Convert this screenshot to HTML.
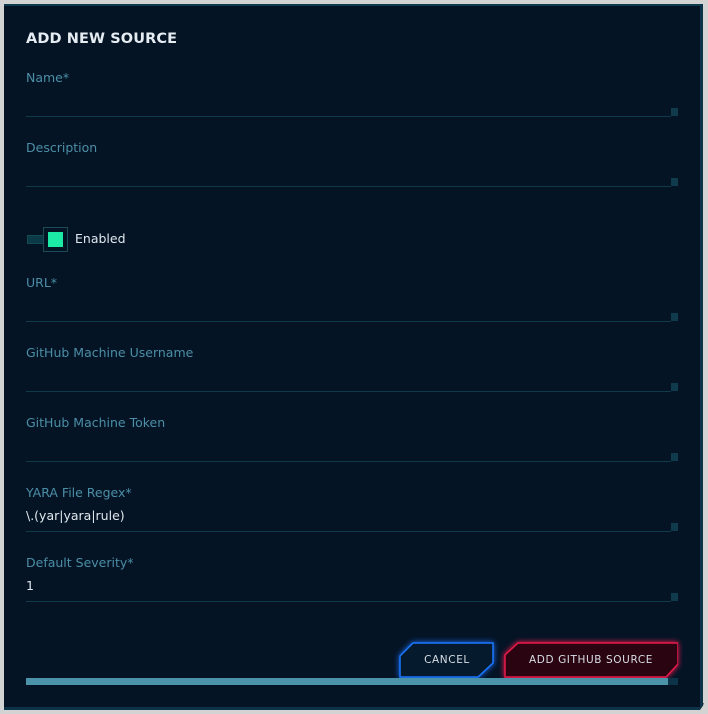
<!DOCTYPE html>
<html><head><meta charset="utf-8"><style>
*{margin:0;padding:0;box-sizing:border-box}
body{width:708px;height:714px;background:#d3d3d3;position:relative;overflow:hidden;font-family:"DejaVu Sans","Liberation Sans",sans-serif}
.panel{position:absolute;left:4px;top:4px;width:699px;height:706px;background:#041425;border-top:2px solid #0f3a4c;border-bottom:3px solid #0c3348;}
.rb{position:absolute;left:700px;top:4px;width:3px;height:706px;background:#0c3348}
.title{position:absolute;left:26px;top:31px;color:#e6edf2;font-size:14.5px;font-weight:bold;letter-spacing:0.1px}
.lab{position:absolute;left:26px;color:#4b8ea6;font-size:12.5px}
.val{position:absolute;left:26px;color:#e0e8ee;font-size:12.5px}
.line{position:absolute;left:26px;width:645px;height:1px;background:#0e3a4a}
.sq{position:absolute;left:671px;width:7px;height:8px;background:#0f3b4d}
.btn{position:absolute;top:642px;height:36px;font-size:10.5px;letter-spacing:0.6px;color:#d8dde4;display:flex;align-items:center;justify-content:center}
.btn svg{position:absolute;left:0;top:0}
.btn span{position:relative}
</style></head><body>
<div class="panel"></div>
<div class="rb"></div>
<svg style="position:absolute;left:670px;top:670px" width="38" height="44"><polygon points="34,0 38,0 38,44 0,44 0,40 30,40 34,34" fill="#d3d3d3"/><line x1="33" y1="33" x2="31" y2="37" stroke="#0c3348" stroke-width="2"/></svg>
<div class="title">ADD NEW SOURCE</div>

<div class="lab" style="top:70px">Name*</div>
<div class="line" style="top:116px"></div><div class="sq" style="top:108px"></div>

<div class="lab" style="top:140px">Description</div>
<div class="line" style="top:186px"></div><div class="sq" style="top:178px"></div>

<div style="position:absolute;left:27px;top:235px;width:18px;height:9px;background:#0b3a46;border:1px solid #0f4a55"></div>
<div style="position:absolute;left:43px;top:227px;width:25px;height:25px;background:#041425;border:1px solid #1c4a58"></div>
<div style="position:absolute;left:48px;top:232px;width:15px;height:15px;background:#1de9a6"></div>
<div class="val" style="left:75px;top:231px">Enabled</div>

<div class="lab" style="top:275px">URL*</div>
<div class="line" style="top:321px"></div><div class="sq" style="top:313px"></div>

<div class="lab" style="top:345px">GitHub Machine Username</div>
<div class="line" style="top:391px"></div><div class="sq" style="top:383px"></div>

<div class="lab" style="top:415px">GitHub Machine Token</div>
<div class="line" style="top:461px"></div><div class="sq" style="top:453px"></div>

<div class="lab" style="top:485px">YARA File Regex*</div>
<div class="val" style="top:508px">\.(yar|yara|rule)</div>
<div class="line" style="top:531px"></div><div class="sq" style="top:523px"></div>

<div class="lab" style="top:555px">Default Severity*</div>
<div class="val" style="top:578px">1</div>
<div class="line" style="top:601px"></div><div class="sq" style="top:593px"></div>

<div class="btn" style="left:399px;width:96px">
<svg width="96" height="36" style="filter:drop-shadow(0 0 3px #1a6fff)"><polygon points="14,1 94,1 94,21 79,35 1,35 1,14" fill="#061a2e" stroke="#1a78ff" stroke-width="1.5"/></svg>
<span>CANCEL</span></div>
<div class="btn" style="left:504px;width:174px">
<svg width="174" height="36" style="filter:drop-shadow(0 0 3px #ff1a50)"><polygon points="14,1 174,1 174,22 162,35 1,35 1,13" fill="#2a0410" stroke="#e8194a" stroke-width="1.5"/></svg>
<span>ADD GITHUB SOURCE</span></div>

<div style="position:absolute;left:26px;top:678px;width:652px;height:7px;background:#0c3348"></div>
<div style="position:absolute;left:26px;top:678px;width:642px;height:7px;background:#4a93a9"></div>
</body></html>
